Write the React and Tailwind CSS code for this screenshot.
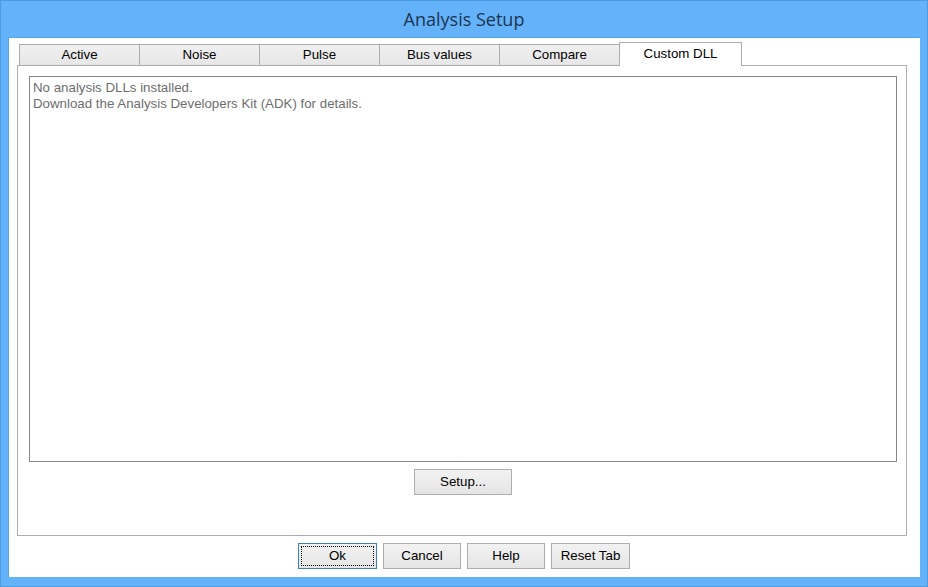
export default function App() {
  const tabs = ["Active", "Noise", "Pulse", "Bus values", "Compare"]
  const btn =
    "h-[26px] border border-[#adadad] bg-gradient-to-b from-[#f2f2f2] to-[#e5e5e5] text-[13.3px] text-black flex items-center justify-center"

  return (
    <div className="w-[928px] h-[587px] bg-[#63b2fa] border border-[#4f9be0] flex flex-col font-['Liberation_Sans',Arial,sans-serif]">
      <div className="h-[36px] flex items-center justify-center">
        <span className="text-[18px] text-[#1e3550] font-['Open_Sans',sans-serif] leading-none -mt-[1px]">Analysis Setup</span>
      </div>

      <div className="ml-[7px] w-[912px] h-[540px] bg-white border-l border-t border-[#55a2e6] pl-[8px] pt-[4px]">
        {/* tab strip */}
        <div className="flex h-[23px] pl-[2px] relative z-10">
          {tabs.map((t) => (
            <div
              key={t}
              className="mt-[2px] w-[120px] h-[22px] border border-r-0 border-[#acacac] bg-gradient-to-b from-[#f0f0f0] to-[#e6e6e6] text-[13.3px] text-black flex items-center justify-center"
            >
              {t}
            </div>
          ))}
          <div className="w-[123px] h-[24px] border border-b-0 border-[#acacac] bg-white text-[13.3px] text-black flex justify-center pt-[1px]">
            Custom DLL
          </div>
        </div>

        {/* tab panel */}
        <div className="w-[890px] h-[471px] border border-[#adadad] bg-white flex flex-col">
          <div className="mt-[10px] ml-[11px] w-[868px] h-[386px] border border-[#828790] px-[3px] pt-[3px] text-[13.3px] leading-[16px] text-[#6d6d6d]">
            <div>No analysis DLLs installed.</div>
            <div>Download the Analysis Developers Kit (ADK) for details.</div>
          </div>
          <div className="flex justify-center mt-[7px] pl-[2px]">
            <div className={btn + " w-[98px]"}>Setup...</div>
          </div>
        </div>

        {/* dialog buttons */}
        <div className="flex justify-center gap-[6px] mt-[7px] pr-[9px]">
          <div className="w-[79px] h-[26px] border border-[#3c7fb1] bg-gradient-to-b from-[#f2f2f2] to-[#e5e5e5] p-[2px]">
            <div className="w-full h-full border border-dotted border-black flex items-center justify-center text-[13.3px] text-black">
              Ok
            </div>
          </div>
          <div className={btn + " w-[78px]"}>Cancel</div>
          <div className={btn + " w-[78px]"}>Help</div>
          <div className={btn + " w-[79px]"}>Reset Tab</div>
        </div>
      </div>
    </div>
  )
}
